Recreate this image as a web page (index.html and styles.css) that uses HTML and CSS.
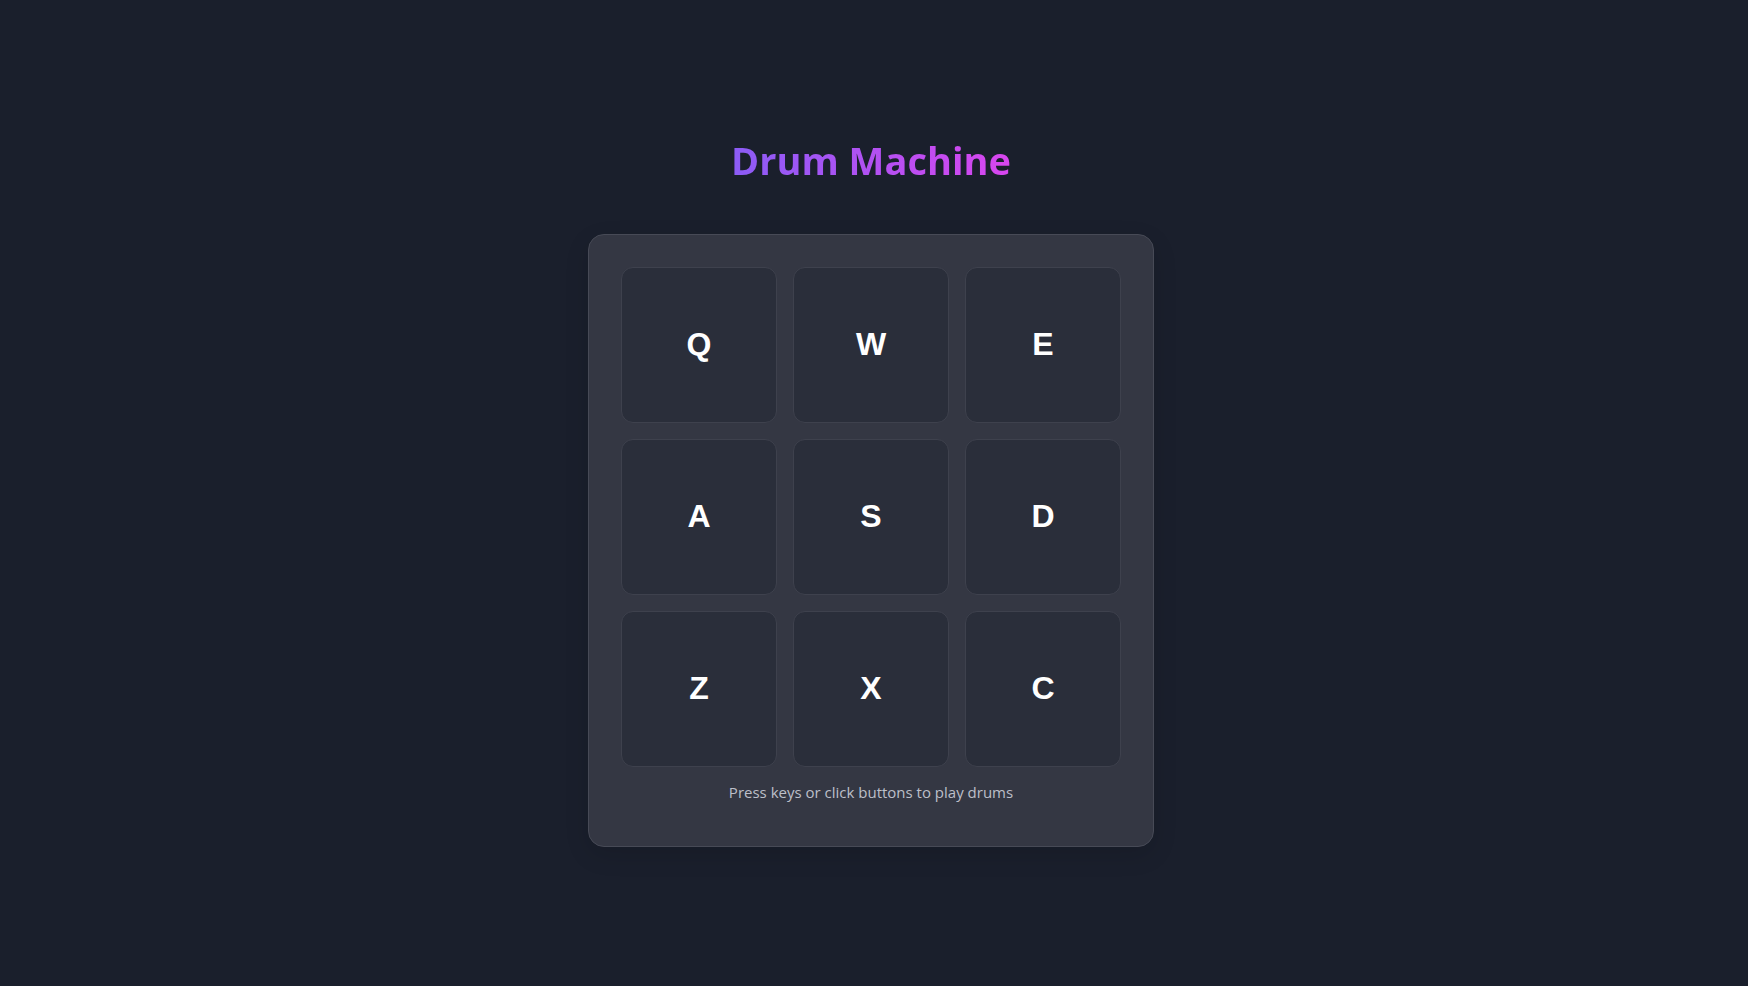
FILE: index.html
```html
<!DOCTYPE html>
<html lang="en">
<head>
<meta charset="utf-8">
<title>Drum Machine</title>
<link rel="stylesheet" href="styles.css">
</head>
<body>
<main class="app">
  <h1 class="title">Drum Machine</h1>
  <section class="machine">
    <div class="pads">
      <button class="pad">Q</button>
      <button class="pad">W</button>
      <button class="pad">E</button>
      <button class="pad">A</button>
      <button class="pad">S</button>
      <button class="pad">D</button>
      <button class="pad">Z</button>
      <button class="pad">X</button>
      <button class="pad">C</button>
    </div>
    <p class="hint">Press keys or click buttons to play drums</p>
  </section>
</main>
</body>
</html>
```
FILE: styles.css
```css
* { box-sizing: border-box; }
html, body { margin: 0; padding: 0; }
body {
  background: #1a1f2c;
  min-height: 100vh;
  font-family: "Open Sans", "Noto Sans", sans-serif;
}
.app {
  min-height: 100vh;
  display: flex;
  flex-direction: column;
  align-items: center;
  justify-content: center;
  padding-right: 6px;
  padding-bottom: 2px;
}
.title {
  margin: 0 0 52px;
  font-size: 38px;
  line-height: 44px;
  font-weight: 700;
  background: linear-gradient(90deg, #8b5cf6, #d946ef);
  -webkit-background-clip: text;
  background-clip: text;
  color: transparent;
}
.machine {
  width: 566px;
  padding: 32px 32px 42px;
  background: #343743;
  border: 1px solid #474a56;
  border-radius: 16px;
  box-shadow: 0 8px 24px rgba(0,0,0,0.12);
}
.pads {
  display: grid;
  grid-template-columns: repeat(3, 1fr);
  gap: 16px;
}
.pad {
  height: 156px;
  background: #2a2e3a;
  border: 1px solid #3e414d;
  border-radius: 12px;
  color: #ffffff;
  font-family: "Liberation Sans", Arial, sans-serif;
  font-weight: 700;
  font-size: 32px;
  padding: 0;
  display: flex;
  align-items: center;
  justify-content: center;
  cursor: pointer;
}
.hint {
  margin: 13px 0 0;
  text-align: center;
  font-size: 15px;
  line-height: 24px;
  color: #bcbfc9;
}
```
